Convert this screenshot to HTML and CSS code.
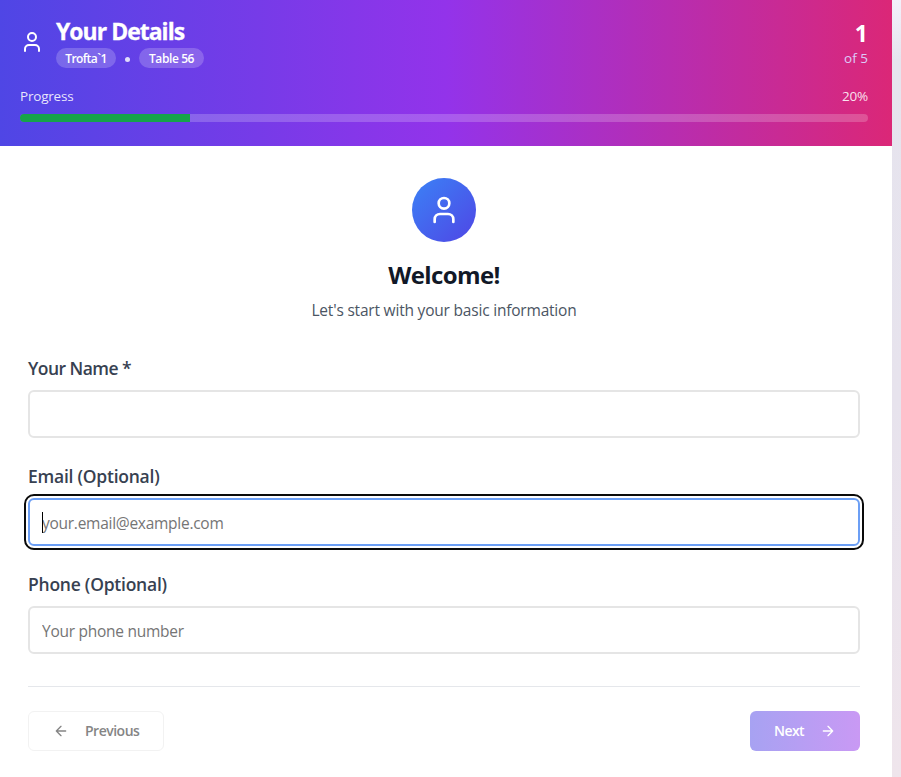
FILE: index.html
```html
<!DOCTYPE html>
<html lang="en">
<head>
<meta charset="utf-8">
<title>Your Details</title>
<link rel="stylesheet" href="styles.css">
</head>
<body>
<main class="card">
  <header class="header">
    <div class="header-row">
      <svg class="icon" width="24" height="24" viewBox="0 0 24 24"><path d="M19 21v-2a4 4 0 0 0-4-4H9a4 4 0 0 0-4 4v2"/><circle cx="12" cy="7" r="4"/></svg>
      <div class="heading">
        <h1>Your Details</h1>
        <div class="tags"><span class="tag tag-place">Trofta`1</span><span class="dot"></span><span class="tag tag-table">Table 56</span></div>
      </div>
      <div class="step"><div class="step-current">1</div><div class="step-total">of 5</div></div>
    </div>
    <div class="progress-row"><span>Progress</span><span>20%</span></div>
    <div class="track"><div class="fill" style="width:20%"></div></div>
  </header>
  <section class="body">
    <div class="intro">
      <div class="avatar"><svg class="icon" width="32" height="32" viewBox="0 0 24 24"><path d="M19 21v-2a4 4 0 0 0-4-4H9a4 4 0 0 0-4 4v2"/><circle cx="12" cy="7" r="4"/></svg></div>
      <h2>Welcome!</h2>
      <p>Let's start with your basic information</p>
    </div>
    <form class="form">
      <div class="field"><label class="label-required" for="name">Your Name *</label><div class="control"><input id="name" type="text"></div></div>
      <div class="field"><label for="email">Email (Optional)</label><div class="control focused"><input id="email" type="email" placeholder="your.email@example.com"><span class="caret"></span></div></div>
      <div class="field"><label for="phone">Phone (Optional)</label><div class="control"><input id="phone" type="tel" placeholder="Your phone number"></div></div>
    </form>
    <footer class="actions">
      <button class="btn previous" type="button"><svg class="icon" width="16" height="16" viewBox="0 0 24 24"><path d="m12 19-7-7 7-7M19 12H5"/></svg><span>Previous</span></button>
      <button class="btn next" type="button"><span>Next</span><svg class="icon" width="16" height="16" viewBox="0 0 24 24"><path d="M5 12h14M12 5l7 7-7 7"/></svg></button>
    </footer>
  </section>
</main>
</body>
</html>
```
FILE: styles.css
```css
* { box-sizing: border-box; margin: 0; }
body {
  height: 777px;
  overflow: hidden;
  font-family: "Segoe UI", "Open Sans", "Noto Sans", sans-serif;
  font-size: 16px;
  line-height: 24px;
  background: linear-gradient(180deg, #f3f1fb 0, #e6e4ee 60px, #e7e3ed 400px, #efe5ec 777px);
}
.card { width: 892px; height: 777px; background: #fff; }
.icon { display: block; flex: none; fill: none; stroke: currentColor; stroke-width: 2; stroke-linecap: round; stroke-linejoin: round; }
.header { height: 146px; padding: 16px 24px 24px 20px; color: #fff; background: linear-gradient(90deg, #4f46e5, #9333ea 50%, #db2777); }
.header-row { display: flex; align-items: center; height: 52px; gap: 12px; }
.heading { flex: 1; }
h1 { height: 32px; font-size: 23px; line-height: 31px; font-weight: 700; letter-spacing: -1px; -webkit-text-stroke: 0.3px #fff; }
.tags { display: flex; align-items: center; height: 20px; }
.tag { height: 20px; border-radius: 10px; background: rgba(255,255,255,.2); font-size: 12px; line-height: 21px; font-weight: 600; text-align: center; white-space: nowrap; }
.tag-place { width: 60px; letter-spacing: -0.55px; }
.tag-table { width: 65px; letter-spacing: -0.4px; }
.dot { width: 5px; height: 5px; margin: 2px 9px 0; border-radius: 50%; background: #e0dcfb; }
.step { text-align: right; }
.step-current { height: 32px; font-size: 23px; line-height: 34px; font-weight: 700; }
.step-total { font-size: 13.5px; line-height: 20px; color: #dccbf8; }
.progress-row { display: flex; justify-content: space-between; margin: 18px 0 8px; font-size: 13.5px; line-height: 20px; letter-spacing: -0.2px; color: rgba(255,255,255,.88); }
.track { height: 8px; border-radius: 4px; overflow: hidden; background: rgba(255,255,255,.2); }
.fill { height: 8px; background: #16a34a; }
.body { padding: 32px 32px 26px 28px; }
.intro { text-align: center; }
.avatar { display: flex; align-items: center; justify-content: center; width: 64px; height: 64px; margin: 0 auto 16px; border-radius: 50%; color: #fff; background: linear-gradient(135deg, #3b82f6, #4f46e5); }
h2 { height: 32px; margin-bottom: 8px; font-size: 24px; line-height: 33px; font-weight: 700; letter-spacing: -0.6px; color: #111827; }
.intro p { color: #4b5563; font-size: 15.5px; line-height: 25px; height: 24px; letter-spacing: -0.2px; }
.form { display: grid; gap: 24px; margin-top: 32px; }
.field { display: grid; gap: 8px; }
label { height: 28px; font-size: 17.5px; line-height: 29px; font-weight: 600; letter-spacing: -0.24px; color: #374151; }
.label-required { letter-spacing: -0.55px; }
.control { position: relative; height: 48px; }
input { display: block; width: 100%; height: 48px; padding: 6px 12px 4px; border: 2px solid #e5e5e5; border-radius: 6px; background: #fff; font: inherit; font-size: 15.5px; letter-spacing: -0.27px; }
input::placeholder { color: #757575; opacity: 1; }
.focused input { border-color: #6c9ff5; outline: 2px solid #0a0a0a; outline-offset: 2px; }
.caret { position: absolute; left: 14px; top: 14px; width: 1px; height: 21px; background: #000; }
.actions { display: flex; justify-content: space-between; margin-top: 32px; padding-top: 24px; border-top: 1px solid #e5e7eb; }
.btn { display: flex; align-items: center; height: 40px; padding: 0 24px; border: 0; border-radius: 6px; font: 600 14px/20px "Segoe UI", "Open Sans", "Noto Sans", sans-serif; letter-spacing: -0.5px; white-space: nowrap; }
.previous { width: 136px; gap: 16px; border: 1px solid #f2f2f2; background: #fff; color: #858585; }
.next { width: 110px; gap: 16px; letter-spacing: -0.55px; color: #fff; background: linear-gradient(90deg, #a7a2f2, #c999f4); }
```
